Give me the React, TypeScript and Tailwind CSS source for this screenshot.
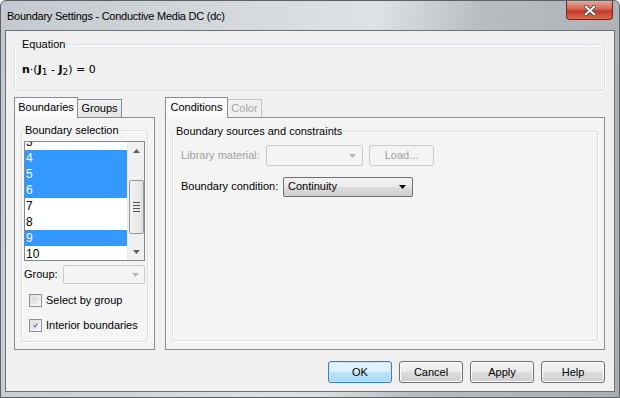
import React from "react";

const font = { fontFamily: '"Liberation Sans", Arial, sans-serif' };

function GroupBox({ label, className, lx = 2, children }: { label: string; className?: string; lx?: number; children?: React.ReactNode }) {
  return (
    <fieldset className={`border border-[#d5dfe5] rounded-[3px] shadow-[inset_1px_1px_0_#ffffff,1px_1px_0_#ffffff] ${className ?? ""}`}>
      <legend style={{ marginLeft: lx }} className="px-[1px] text-[11px] leading-[13px] text-black">{label}</legend>
      {children}
    </fieldset>
  );
}

function Arrow({ color = "#000" }: { color?: string }) {
  return (
    <svg width="7" height="4" viewBox="0 0 7 4">
      <path d="M0 0 H7 L3.5 4 Z" fill={color} />
    </svg>
  );
}

function Button({ label, def }: { label: string; def?: boolean }) {
  return (
    <div
      className={`w-[64px] h-[22px] rounded-[3px] border flex items-center justify-center text-[11px] text-black ${
        def
          ? "border-[#3c7fb1] bg-[linear-gradient(#eaf6fd_0%,#d9f0fc_50%,#bee6fd_50%,#a7d9f5_100%)] shadow-[inset_0_0_0_1px_#c7e7f8]"
          : "border-[#707070] bg-[linear-gradient(#f2f2f2_0%,#ebebeb_50%,#dddddd_50%,#cfcfcf_100%)] shadow-[inset_0_0_0_1px_#fcfcfc]"
      }`}
    >
      {label}
    </div>
  );
}

function Checkbox({ checked, label }: { checked?: boolean; label: string }) {
  return (
    <div className="flex items-center gap-[4px] h-[13px]">
      <div className="w-[13px] h-[13px] border border-[#8e8f8f] bg-[linear-gradient(135deg,#dcdcdc,#fcfcfc)] p-[2px]">
        <div className="w-full h-full border border-[#e6e6e6] bg-[linear-gradient(135deg,#cbcfd5,#f6f6f6)] flex items-center justify-center">
          {checked && (
            <svg width="9" height="9" viewBox="0 0 9 9" className="-mt-[1px]">
              <path d="M1 4.5 L3.5 7.5 L8 0.8" stroke="#3e5aa0" strokeWidth="1.8" fill="none" />
            </svg>
          )}
        </div>
      </div>
      <span className="text-[11px] text-black whitespace-nowrap">{label}</span>
    </div>
  );
}

const items = [
  { n: "3", s: false },
  { n: "4", s: true },
  { n: "5", s: true },
  { n: "6", s: true },
  { n: "7", s: false },
  { n: "8", s: false },
  { n: "9", s: true },
  { n: "10", s: false },
];

export default function App() {
  return (
    <div style={font} className="w-[620px] h-[398px] bg-[linear-gradient(100deg,#c3c9cf_0%,#d3d7db_30%,#dfe2e4_55%,#b9bdc1_70%,#a9aeb3_100%)] border border-[#5d6166] rounded-t-[6px] flex flex-col overflow-hidden">
      {/* title bar */}
      <div className="h-[29px] flex items-start relative">
        <div className="pl-[6px] pt-[7px] text-[11px] text-black tracking-[-0.25px] whitespace-nowrap">Boundary Settings - Conductive Media DC (dc)</div>
        <div className="ml-auto mr-[6px] w-[47px] h-[19px] rounded-b-[4px] border border-t-0 border-[#6b2a26] bg-[linear-gradient(#e9a99b_0%,#d7644f_45%,#c4392a_55%,#d86a4f_100%)] flex items-center justify-center">
          <svg width="12" height="11" viewBox="0 0 12 11">
            <path d="M1.5 1.5 L10.5 9.5 M10.5 1.5 L1.5 9.5" stroke="#3b3b3b" strokeWidth="3.6" strokeLinecap="round" />
            <path d="M1.5 1.5 L10.5 9.5 M10.5 1.5 L1.5 9.5" stroke="#ffffff" strokeWidth="2" strokeLinecap="round" />
          </svg>
        </div>
      </div>
      {/* client area */}
      <div className="mx-[4px] mb-[5px] flex-1 border border-[#6d7177] bg-[#f0f0f0] flex flex-col pl-[8px] pr-[7px] pt-[7px]">
        <GroupBox label="Equation" lx={6} className="w-[591px] h-[53px]">
          <div className="mt-[11px] ml-[7px] text-[11px] text-black" style={{ fontFamily: '"DejaVu Sans", sans-serif' }}>
            <span className="font-bold">n</span>·(<span className="font-bold">J</span>
            <sub className="text-[9px]">1</sub> - <span className="font-bold">J</span>
            <sub className="text-[9px]">2</sub>) = 0
          </div>
        </GroupBox>

        <div className="flex mt-[5px] gap-[10px]">
          {/* left tabs */}
          <div className="w-[141px] flex flex-col">
            <div className="flex items-end h-[21px]">
              <div className="h-[21px] w-[64px] border border-b-0 border-[#898c95] bg-[#f9f9f9] text-[11px] flex items-center justify-center relative z-10 -mb-[1px] pb-[1px]">Boundaries</div>
              <div className="h-[18px] w-[44px] border border-b-0 border-l-0 border-[#898c95] bg-[linear-gradient(#f2f2f2,#e3e3e3)] text-[11px] flex items-center justify-center">Groups</div>
            </div>
            <div className="h-[233px] border border-[#898c95] bg-[#f4f4f4] px-[6px] pt-[6px]">
              <GroupBox label="Boundary selection" className="h-[218px]">
                <div className="px-[2px]">
                  <div className="flex h-[120px] mt-[4px] border border-[#828790] bg-white overflow-hidden">
                    <div className="flex-1 flex flex-col -mt-[8px]">
                      {items.map((it) => (
                        <div
                          key={it.n}
                          className={`h-[16px] leading-[16px] pl-[1px] text-[12px] shrink-0 ${it.s ? "bg-[#3399ff] text-white" : "text-black"}`}
                        >
                          {it.n}
                        </div>
                      ))}
                    </div>
                    <div className="w-[17px] bg-[#f0f0f0] flex flex-col items-center border-l border-[#eaeaea]">
                      <div className="h-[17px] flex items-center justify-center">
                        <svg width="7" height="4" viewBox="0 0 7 4"><path d="M0 4 H7 L3.5 0 Z" fill="#606060" /></svg>
                      </div>
                      <div className="h-[21px]" />
                      <div className="w-[15px] h-[54px] rounded-[2px] border border-[#979797] bg-[linear-gradient(90deg,#f3f3f3,#e2e2e2)] flex flex-col items-center justify-center gap-[2px]">
                        <div className="w-[7px] h-[1px] bg-[#555]" />
                        <div className="w-[7px] h-[1px] bg-[#555]" />
                        <div className="w-[7px] h-[1px] bg-[#555]" />
                        <div className="w-[7px] h-[1px] bg-[#555]" />
                      </div>
                      <div className="flex-1" />
                      <div className="h-[17px] flex items-center justify-center">
                        <Arrow color="#606060" />
                      </div>
                    </div>
                  </div>
                  <div className="flex items-center mt-[4px] h-[19px]">
                    <span className="text-[11px] text-black w-[39px]">Group:</span>
                    <div className="w-[82px] h-[19px] border border-[#c9c9c9] rounded-[2px] bg-[#f4f4f4] flex items-center justify-end pr-[5px]">
                      <Arrow color="#b8b8b8" />
                    </div>
                  </div>
                  <div className="ml-[5px] mt-[10px]">
                    <Checkbox label="Select by group" />
                  </div>
                  <div className="ml-[5px] mt-[12px]">
                    <Checkbox checked label="Interior boundaries" />
                  </div>
                </div>
              </GroupBox>
            </div>
          </div>

          {/* right tabs */}
          <div className="w-[440px] flex flex-col">
            <div className="flex items-end h-[21px]">
              <div className="h-[21px] w-[63px] border border-b-0 border-[#898c95] bg-[#f9f9f9] text-[11px] flex items-center justify-center relative z-10 -mb-[1px] pb-[1px]">Conditions</div>
              <div className="h-[18px] w-[34px] border border-b-0 border-l-0 border-[#c3c3c3] bg-[#f0f0f0] text-[11px] text-[#a7a7a7] flex items-center justify-center">Color</div>
            </div>
            <div className="h-[233px] border border-[#898c95] bg-[#f4f4f4] px-[6px] pt-[7px]">
              <GroupBox label="Boundary sources and constraints" className="h-[216px]">
                <div className="pl-[8px]">
                  <div className="flex items-center h-[21px] mt-[7px]">
                    <span className="text-[11px] text-[#a0a0a0] w-[85px] shrink-0 whitespace-nowrap">Library material:</span>
                    <div className="w-[97px] h-[21px] border border-[#c9c9c9] rounded-[2px] bg-[#f4f4f4] flex items-center justify-end pr-[6px]">
                      <Arrow color="#b8b8b8" />
                    </div>
                    <div className="ml-[6px] w-[65px] h-[21px] border border-[#c9c9c9] rounded-[3px] bg-[#f4f4f4] flex items-center justify-center text-[11px] text-[#a0a0a0]">Load...</div>
                  </div>
                  <div className="flex items-center mt-[11px] h-[19px]">
                    <span className="text-[11px] text-black w-[102px] shrink-0 whitespace-nowrap">Boundary condition:</span>
                    <div className="w-[130px] h-[20px] border border-[#707070] rounded-[2px] bg-[linear-gradient(#f2f2f2_0%,#ebebeb_50%,#dddddd_50%,#cfcfcf_100%)] flex items-center pl-[4px] pr-[6px]">
                      <span className="text-[11px] text-black flex-1">Continuity</span>
                      <Arrow />
                    </div>
                  </div>
                </div>
              </GroupBox>
            </div>
          </div>
        </div>

        <div className="flex justify-end gap-[7px] mt-[11px] pr-[2px]">
          <Button label="OK" def />
          <Button label="Cancel" />
          <Button label="Apply" />
          <Button label="Help" />
        </div>
      </div>
    </div>
  );
}
